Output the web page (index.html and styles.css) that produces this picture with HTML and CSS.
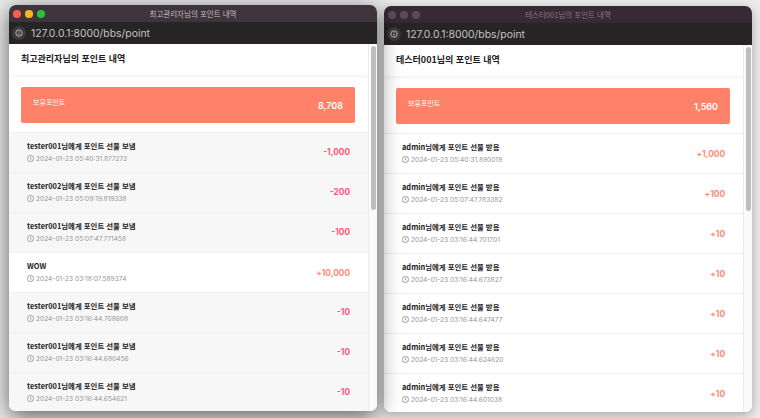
FILE: index.html
```html
<!DOCTYPE html>
<html lang="ko">
<head>
<meta charset="utf-8">
<title>포인트 내역</title>
<link rel="stylesheet" href="styles.css">
</head>
<body>
<div class="desk">
  <section class="win win-a">
    <div class="titlebar">
      <span class="lights"><i class="dot red"></i><i class="dot yellow"></i><i class="dot green"></i></span>
      <span class="wtitle">최고관리자님의 포인트 내역</span>
    </div>
    <div class="urlbar">
      <span class="info"><svg viewBox="0 0 10 10" width="8" height="8"><circle cx="5" cy="5" r="4" fill="none" stroke="currentColor" stroke-width="1"/><path d="M5 2.8v.9M5 4.5v2.7" stroke="currentColor" stroke-width="1"/></svg></span>
      <span class="url">127.0.0.1:8000/bbs/point</span>
    </div>
    <div class="viewport">
      <div class="page">
        <h1 class="head">최고관리자님의 포인트 내역</h1>
        <div class="card"><span class="card-label">보유포인트</span><b class="card-value">8,708</b></div>
        <ul class="list">
          <li class="row dim"><div class="txt"><strong>tester001님에게 포인트 선물 보냄</strong><time><svg class="clock" viewBox="0.5 0.5 9 9"><circle cx="5" cy="5" r="4" /><path d="M5 2.7V5.2L6.6 6"/></svg>2024-01-23 05:40:31.877272</time></div><span class="amt neg">-1,000</span></li>
          <li class="row dim"><div class="txt"><strong>tester002님에게 포인트 선물 보냄</strong><time><svg class="clock" viewBox="0.5 0.5 9 9"><circle cx="5" cy="5" r="4" /><path d="M5 2.7V5.2L6.6 6"/></svg>2024-01-23 05:09:19.819338</time></div><span class="amt neg">-200</span></li>
          <li class="row dim"><div class="txt"><strong>tester001님에게 포인트 선물 보냄</strong><time><svg class="clock" viewBox="0.5 0.5 9 9"><circle cx="5" cy="5" r="4" /><path d="M5 2.7V5.2L6.6 6"/></svg>2024-01-23 05:07:47.771458</time></div><span class="amt neg">-100</span></li>
          <li class="row"><div class="txt"><strong>WOW</strong><time><svg class="clock" viewBox="0.5 0.5 9 9"><circle cx="5" cy="5" r="4" /><path d="M5 2.7V5.2L6.6 6"/></svg>2024-01-23 03:18:07.589374</time></div><span class="amt pos">+10,000</span></li>
          <li class="row dim"><div class="txt"><strong>tester001님에게 포인트 선물 보냄</strong><time><svg class="clock" viewBox="0.5 0.5 9 9"><circle cx="5" cy="5" r="4" /><path d="M5 2.7V5.2L6.6 6"/></svg>2024-01-23 03:16:44.708608</time></div><span class="amt neg">-10</span></li>
          <li class="row dim"><div class="txt"><strong>tester001님에게 포인트 선물 보냄</strong><time><svg class="clock" viewBox="0.5 0.5 9 9"><circle cx="5" cy="5" r="4" /><path d="M5 2.7V5.2L6.6 6"/></svg>2024-01-23 03:16:44.680456</time></div><span class="amt neg">-10</span></li>
          <li class="row dim"><div class="txt"><strong>tester001님에게 포인트 선물 보냄</strong><time><svg class="clock" viewBox="0.5 0.5 9 9"><circle cx="5" cy="5" r="4" /><path d="M5 2.7V5.2L6.6 6"/></svg>2024-01-23 03:16:44.654621</time></div><span class="amt neg">-10</span></li>
        </ul>
      </div>
      <div class="track"><div class="thumb"></div></div>
    </div>
  </section>

  <section class="win win-b">
    <div class="titlebar">
      <span class="lights"><i class="dot off"></i><i class="dot off"></i><i class="dot off"></i></span>
      <span class="wtitle">테스터001님의 포인트 내역</span>
    </div>
    <div class="urlbar">
      <span class="info"><svg viewBox="0 0 10 10" width="8" height="8"><circle cx="5" cy="5" r="4" fill="none" stroke="currentColor" stroke-width="1"/><path d="M5 2.8v.9M5 4.5v2.7" stroke="currentColor" stroke-width="1"/></svg></span>
      <span class="url">127.0.0.1:8000/bbs/point</span>
    </div>
    <div class="viewport">
      <div class="page">
        <h1 class="head">테스터001님의 포인트 내역</h1>
        <div class="card"><span class="card-label">보유포인트</span><b class="card-value">1,560</b></div>
        <ul class="list">
          <li class="row"><div class="txt"><strong>admin님에게 포인트 선물 받음</strong><time><svg class="clock" viewBox="0.5 0.5 9 9"><circle cx="5" cy="5" r="4" /><path d="M5 2.7V5.2L6.6 6"/></svg>2024-01-23 05:40:31.890019</time></div><span class="amt pos">+1,000</span></li>
          <li class="row"><div class="txt"><strong>admin님에게 포인트 선물 받음</strong><time><svg class="clock" viewBox="0.5 0.5 9 9"><circle cx="5" cy="5" r="4" /><path d="M5 2.7V5.2L6.6 6"/></svg>2024-01-23 05:07:47.783382</time></div><span class="amt pos">+100</span></li>
          <li class="row"><div class="txt"><strong>admin님에게 포인트 선물 받음</strong><time><svg class="clock" viewBox="0.5 0.5 9 9"><circle cx="5" cy="5" r="4" /><path d="M5 2.7V5.2L6.6 6"/></svg>2024-01-23 03:16:44.701701</time></div><span class="amt pos">+10</span></li>
          <li class="row"><div class="txt"><strong>admin님에게 포인트 선물 받음</strong><time><svg class="clock" viewBox="0.5 0.5 9 9"><circle cx="5" cy="5" r="4" /><path d="M5 2.7V5.2L6.6 6"/></svg>2024-01-23 03:16:44.673827</time></div><span class="amt pos">+10</span></li>
          <li class="row"><div class="txt"><strong>admin님에게 포인트 선물 받음</strong><time><svg class="clock" viewBox="0.5 0.5 9 9"><circle cx="5" cy="5" r="4" /><path d="M5 2.7V5.2L6.6 6"/></svg>2024-01-23 03:16:44.647477</time></div><span class="amt pos">+10</span></li>
          <li class="row"><div class="txt"><strong>admin님에게 포인트 선물 받음</strong><time><svg class="clock" viewBox="0.5 0.5 9 9"><circle cx="5" cy="5" r="4" /><path d="M5 2.7V5.2L6.6 6"/></svg>2024-01-23 03:16:44.624620</time></div><span class="amt pos">+10</span></li>
          <li class="row"><div class="txt"><strong>admin님에게 포인트 선물 받음</strong><time><svg class="clock" viewBox="0.5 0.5 9 9"><circle cx="5" cy="5" r="4" /><path d="M5 2.7V5.2L6.6 6"/></svg>2024-01-23 03:16:44.601038</time></div><span class="amt pos">+10</span></li>
        </ul>
      </div>
      <div class="track"><div class="thumb"></div></div>
    </div>
  </section>
</div>
</body>
</html>
```

FILE: styles.css
```css
* { box-sizing: border-box; }
html, body { margin: 0; padding: 0; height: 100%; overflow: hidden; }
body { font-family: "Noto Sans CJK KR", "Noto Sans", sans-serif; }
.desk { position: relative; width: 760px; height: 418px; background: #ececec; overflow: hidden; }
.win { position: absolute; width: 368px; height: 406px; border-radius: 7px; overflow: hidden; display: flex; flex-direction: column; }
.win-a { left: 9px; top: 5px; z-index: 2; box-shadow: 0 5px 22px rgba(0,0,0,.62); }
.win-b { left: 384px; top: 6px; z-index: 1; box-shadow: 0 3px 12px rgba(0,0,0,.3); }
.titlebar { position: relative; height: 17px; flex: none; background: #3e343b; display: flex; align-items: center; justify-content: center; }
.win-b .titlebar { background: #382934; }
.lights { position: absolute; left: 4px; top: 5px; display: flex; gap: 4.7px; }
.dot { width: 7.5px; height: 7.5px; border-radius: 50%; display: block; }
.red { background: #fb5a52; }
.yellow { background: #fdb528; }
.green { background: #27c13e; }
.off { background: #5a4c56; }
.wtitle { font-size: 7.5px; color: #c0b9bd; line-height: 1; }
.win-b .wtitle { color: #85787f; }
.urlbar { height: 22px; flex: none; background: #272426; display: flex; align-items: center; padding-left: 3px; gap: 5px; }
.info { width: 14px; height: 14px; border-radius: 50%; background: #3d3a3c; color: #d8d8d8; display: flex; align-items: center; justify-content: center; }
.url { font-family: "Inter", "Noto Sans", sans-serif; font-size: 10.4px; color: #c4c2c3; }
.viewport { flex: 1; min-height: 0; background: #fff; display: flex; overflow: hidden; }
.page { flex: 1; min-width: 0; }
.head { margin: 0; height: 31px; padding: 0 0 2px 12px; display: flex; align-items: center; font-size: 9px; font-weight: 700; color: #1c1c1c; background: #fff; box-shadow: 0 1px 4px rgba(0,0,0,.07); }
.card { margin: 12px 13px 9px 12px; height: 36px; padding: 0 12px; border-radius: 2px; background: #ff8168; color: #fff; display: flex; align-items: center; justify-content: space-between; }
.card-label { font-size: 7px; margin-top: -6px; }
.card-value { font-family: "Inter", "Noto Sans", sans-serif; font-size: 9px; font-weight: 600; }
.list { list-style: none; margin: 0; padding: 0; border-top: 1px solid #eef1f1; }
.row { height: 40px; padding: 0 18px 0 18px; display: flex; align-items: center; justify-content: space-between; border-bottom: 1px solid #eff0f0; background: #fff; }
.row.dim { background: #f7f7f7; }
.txt { display: flex; flex-direction: column; gap: 3px; padding-bottom: 1px; }
.txt strong { font-size: 7.4px; font-weight: 700; color: #222; line-height: 10px; }
.txt time { font-family: "Inter", "Noto Sans", sans-serif; font-size: 6.6px; color: #969696; line-height: 10px; display: flex; align-items: center; gap: 2px; }
.clock { width: 7px; height: 7px; fill: none; stroke: #888; stroke-width: 1; flex: none; }
.amt { font-family: "Inter", "Noto Sans", sans-serif; font-size: 8.3px; font-weight: 700; }
.neg { color: #ff5577; padding-bottom: 1px; }
.pos { color: #ff8a72; }
.track { width: 9px; flex: none; background: #fafafa; border-left: 1px solid #ececec; padding: 2px 1px 0 2px; }
.thumb { height: 164px; border-radius: 3px; background: #bdbdbd; }
```
